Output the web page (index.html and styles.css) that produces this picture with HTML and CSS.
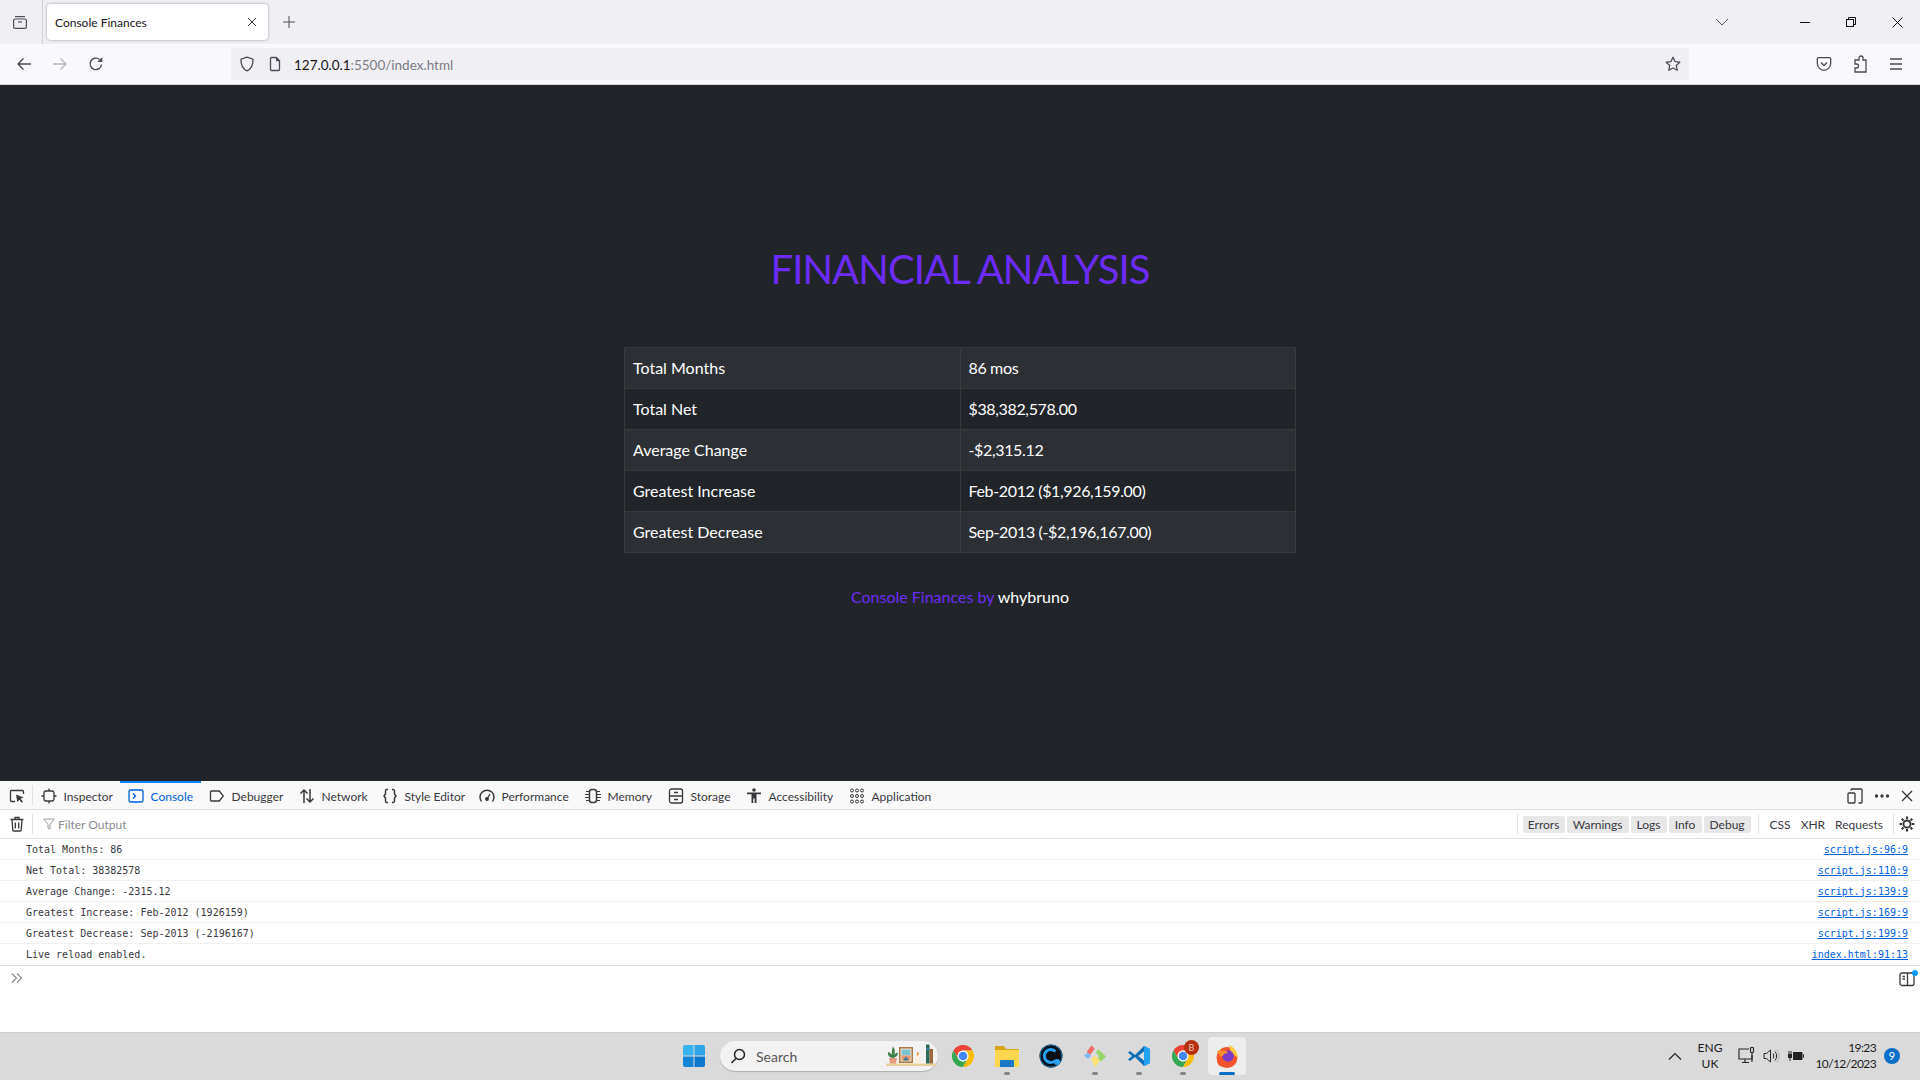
FILE: index.html
```html
<!DOCTYPE html>
<html lang="en">
<head>
    <meta charset="UTF-8">
    <title>Console Finances</title>
    <link rel="stylesheet" href="styles.css">
</head>
<body>
    <svg class="defs">
        <symbol id="chrome" viewBox="0 0 24 24">
            <path fill="#ea4335" d="M2.47 6.5A11 11 0 0 1 21.53 6.5H12A5.5 5.5 0 0 0 7.24 14.75Z"/>
            <path fill="#34a853" d="M2.47 6.5L7.24 14.75A5.5 5.5 0 0 0 16.76 14.75L12 23A11 11 0 0 1 2.47 6.5Z"/>
            <path fill="#fbbc05" d="M21.53 6.5H12A5.5 5.5 0 0 1 16.76 14.75L12 23A11 11 0 0 0 21.53 6.5Z"/>
            <circle cx="12" cy="12" r="5.4" fill="#fff"/>
            <circle cx="12" cy="12" r="4.3" fill="#4285f4"/>
        </symbol>
    </svg>

    <!-- tab strip -->
    <div class="tabbar">
        <span class="tab-list-btn">
            <svg width="16" height="16" viewBox="0 0 16 16" fill="none" stroke="#4a4a55" stroke-width="1.2"><path d="M3 2.6h10"/><rect x="1.6" y="5" width="12.8" height="9.4" rx="1.6"/><path d="M6 8h4"/></svg>
        </span>
        <div class="tab">
            <span class="tab-title">Console Finances</span>
            <svg width="10" height="10" viewBox="0 0 10 10" stroke="#333" stroke-width="1"><path d="M1 1l8 8M9 1l-8 8"/></svg>
        </div>
        <span class="new-tab">
            <svg width="12" height="12" viewBox="0 0 12 12" stroke="#4a4a55" stroke-width="1"><path d="M6 0v12M0 6h12"/></svg>
        </span>
        <span class="tab-menu">
            <svg width="14" height="8" viewBox="0 0 14 8" fill="none" stroke="#5b5b66" stroke-width="1"><path d="M1 1l6 6 6-6"/></svg>
        </span>
        <span class="win-btn"><svg width="10" height="10" viewBox="0 0 10 10" stroke="#111" stroke-width="1"><path d="M0 5.5h10"/></svg></span>
        <span class="win-btn"><svg width="10" height="10" viewBox="0 0 10 10" fill="none" stroke="#111" stroke-width="1"><rect x=".5" y="2.5" width="7" height="7"/><path d="M2.5 2.5v-2h7v7h-2"/></svg></span>
        <span class="win-btn"><svg width="11" height="11" viewBox="0 0 11 11" stroke="#111" stroke-width="1"><path d="M.5.5l10 10M10.500.5l-10 10"/></svg></span>
    </div>

    <!-- address bar -->
    <div class="navbar">
        <span class="nav-btn"><svg width="16" height="16" viewBox="0 0 16 16" fill="none" stroke="#4a4a55" stroke-width="1.3"><path d="M15 8H2M7.500 2.500L2 8l5.500 5.500"/></svg></span>
        <span class="nav-btn"><svg width="16" height="16" viewBox="0 0 16 16" fill="none" stroke="#b4b4ba" stroke-width="1.3"><path d="M1 8h13M8.500 2.500L14 8l-5.500 5.500"/></svg></span>
        <span class="nav-btn"><svg width="16" height="16" viewBox="0 0 16 16" fill="none" stroke="#4a4a55" stroke-width="1.4"><path d="M13.500 8.500A5.700 5.700 0 1 1 11.500 3.500"/><path fill="#4a4a55" stroke="none" d="M14.300 1v5h-5z"/></svg></span>
        <div class="urlbar">
            <svg class="shield" width="16" height="16" viewBox="0 0 16 16" fill="none" stroke="#4a4a55" stroke-width="1.3"><path d="M8 1.200l6 2c.2 5.500-1.500 9.500-6 11.600C3.500 12.700 1.800 8.700 2 3.200z"/></svg>
            <svg class="page-icon" width="16" height="16" viewBox="0 0 16 16" fill="none" stroke="#4a4a55" stroke-width="1.3"><path d="M3.500 2.500a1 1 0 0 1 1-1h4.700l3.300 3.300v8.700a1 1 0 0 1-1 1h-7a1 1 0 0 1-1-1z"/><path fill="#4a4a55" stroke="none" d="M9 1.500h1l2.500 2.500v1.200H9z"/></svg>
            <span class="url"><span class="url-host">127.0.0.1</span>:5500/index.html</span>
            <svg class="star" width="16" height="16" viewBox="0 0 16 16" fill="none" stroke="#4a4a55" stroke-width="1.3" stroke-linejoin="round"><path d="M8 1.200l2 4.400 4.800.6-3.500 3.300.9 4.800L8 12l-4.200 2.300.9-4.800L1.200 6.200 6 5.600z"/></svg>
        </div>
        <span class="nav-tool"><svg width="16" height="16" viewBox="0 0 16 16" fill="none" stroke="#4a4a55" stroke-width="1.300"><path d="M2.500 1.700h11a1.200 1.200 0 0 1 1.200 1.200V7c0 4-3 7.300-6.700 7.300S1.300 11 1.300 7V2.900a1.200 1.200 0 0 1 1.200-1.200z"/><path d="M5 6.500l3 3 3-3"/></svg></span>
        <span class="nav-tool"><svg width="16" height="18" viewBox="0 0 16 18" fill="none" stroke="#4a4a55" stroke-width="1.300"><path d="M7 5V3a2 2 0 0 1 4 0v2h3v12H3v-4h1.500a2 2 0 0 0 0-4H3V5z"/></svg></span>
        <span class="nav-tool"><svg width="14" height="12" viewBox="0 0 14 12" stroke="#4a4a55" stroke-width="1.300"><path d="M1 1h12M1 6h12M1 11h12"/></svg></span>
    </div>

    <!-- the page itself -->
    <main class="page">
        <h1 class="page-title">FINANCIAL ANALYSIS</h1>
        <table class="stats">
            <tr><td>Total Months</td><td>86 mos</td></tr>
            <tr><td>Total Net</td><td>$38,382,578.00</td></tr>
            <tr><td>Average Change</td><td>-$2,315.12</td></tr>
            <tr><td>Greatest Increase</td><td>Feb-2012 ($1,926,159.00)</td></tr>
            <tr><td>Greatest Decrease</td><td>Sep-2013 (-$2,196,167.00)</td></tr>
        </table>
        <p class="credit">Console Finances by <span class="credit-name">whybruno</span></p>
    </main>

    <!-- devtools -->
    <section class="devtools">
        <div class="dev-toolbar">
            <span class="picker">
                <svg width="16" height="16" viewBox="0 0 16 16" fill="none" stroke="#38383d" stroke-width="1.300"><path d="M6 13.500H2.500a1 1 0 0 1-1-1v-9a1 1 0 0 1 1-1h11a1 1 0 0 1 1 1V6"/><path fill="#38383d" stroke="none" d="M7 6.500l7.500 3-3 1.300 2.500 3-1.300 1-2.400-3-2 2.200z"/></svg>
            </span>
            <div class="dev-tabs">
                <span class="dev-tab"><svg width="16" height="16" viewBox="0 0 16 16" fill="none" stroke="#38383d" stroke-width="1.300"><rect x="3" y="3" width="10" height="10" rx="2"/><path d="M8 .5V3M8 13v2.500M.5 8H3M13 8h2.500"/></svg>Inspector</span>
                <span class="dev-tab is-active"><svg width="16" height="16" viewBox="0 0 16 16" fill="none" stroke="#0060df" stroke-width="1.300"><rect x="1" y="2" width="14" height="12" rx="1.500"/><path d="M5 5.500L7.500 8 5 10.500"/></svg>Console</span>
                <span class="dev-tab"><svg width="16" height="16" viewBox="0 0 16 16" fill="none" stroke="#38383d" stroke-width="1.300"><path d="M2.500 3h7.800l4 5-4 5H2.500a1 1 0 0 1-1-1V4a1 1 0 0 1 1-1z"/></svg>Debugger</span>
                <span class="dev-tab"><svg width="16" height="16" viewBox="0 0 16 16" fill="none" stroke="#38383d" stroke-width="1.500"><path d="M5 15V2M1.500 5.500L5 2l3.500 3.500M11 1v13M7.500 10.500L11 14l3.500-3.500"/></svg>Network</span>
                <span class="dev-tab"><svg width="16" height="16" viewBox="0 0 16 16" fill="none" stroke="#38383d" stroke-width="1.500"><path d="M6 1.500H5a1.500 1.500 0 0 0-1.500 1.500v3L2 8l1.500 2v3A1.500 1.500 0 0 0 5 14.500h1M10 1.500h1A1.500 1.500 0 0 1 12.500 3v3L14 8l-1.500 2v3a1.500 1.500 0 0 1-1.500 1.500h-1"/></svg>Style Editor</span>
                <span class="dev-tab"><svg width="16" height="16" viewBox="0 0 16 16" fill="none" stroke="#38383d" stroke-width="1.500"><path d="M2.500 13.500A7 7 0 1 1 13.500 13.500"/><path d="M8 11l3-5" stroke-width="1.300"/><circle cx="8" cy="11" r="1.200" fill="#38383d"/></svg>Performance</span>
                <span class="dev-tab"><svg width="16" height="16" viewBox="0 0 16 16" fill="none" stroke="#38383d" stroke-width="1"><rect x="4.500" y="1.500" width="7" height="13" rx="2.500" stroke-width="1.500"/><path d="M1 3.500h3M0 6.500h4M0 9.500h4M1 12.500h3M12 3.500h3M12 6.500h4M12 9.500h4M12 12.500h3"/></svg>Memory</span>
                <span class="dev-tab"><svg width="16" height="16" viewBox="0 0 16 16" fill="none" stroke="#38383d" stroke-width="1.300"><rect x="1.500" y="1" width="13" height="14" rx="2"/><path d="M1.500 8h13M6 4.500h4M6 11.500h4"/></svg>Storage</span>
                <span class="dev-tab"><svg width="16" height="16" viewBox="0 0 16 16" fill="#38383d"><circle cx="8" cy="2" r="1.800"/><path d="M1 4.500h14v1.800h-4.500V15H8.700v-4.500H7.300V15H5.500V6.300H1z"/></svg>Accessibility</span>
                <span class="dev-tab"><svg width="16" height="16" viewBox="0 0 16 16" fill="none" stroke="#38383d" stroke-width="1"><circle cx="3" cy="2.500" r="1.500"/><circle cx="8" cy="2.500" r="1.500"/><circle cx="13" cy="2.500" r="1.500"/><circle cx="3" cy="8" r="1.500"/><circle cx="8" cy="8" r="1.500"/><circle cx="13" cy="8" r="1.500"/><circle cx="3" cy="13.500" r="1.500"/><circle cx="8" cy="13.500" r="1.500"/><circle cx="13" cy="13.500" r="1.500"/></svg>Application</span>
            </div>
            <div class="dev-actions">
                <svg width="16" height="16" viewBox="0 0 16 16" fill="none" stroke="#38383d" stroke-width="1.300"><rect x="1" y="5" width="7" height="10" rx="1"/><path d="M4 2.500V2a1 1 0 0 1 1-1h9a1 1 0 0 1 1 1v12a1 1 0 0 1-1 1h-2.500"/></svg>
                <svg width="16" height="16" viewBox="0 0 16 16" fill="#38383d"><circle cx="2.500" cy="8" r="1.700"/><circle cx="8" cy="8" r="1.700"/><circle cx="13.500" cy="8" r="1.700"/></svg>
                <svg width="12" height="12" viewBox="0 0 12 12" stroke="#38383d" stroke-width="1.400"><path d="M1 1l10 10M11 1L1 11"/></svg>
            </div>
        </div>

        <div class="filter-bar">
            <span class="picker">
                <svg width="16" height="16" viewBox="0 0 16 16" fill="none" stroke="#38383d" stroke-width="1.300"><path d="M1.500 3.500h13M6 3.500V1.500h4v2M3 3.500l.8 10.500a1 1 0 0 0 1 1h6.400a1 1 0 0 0 1-1L13 3.500M6.300 6.500v6M9.700 6.500v6"/></svg>
            </span>
            <span class="filter-input">
                <svg width="12" height="12" viewBox="0 0 12 12" fill="none" stroke="#9a9aa0" stroke-width="1"><path d="M.7 1h10.600L7 6.500v4.500L5 10V6.500z"/></svg>
                Filter Output
            </span>
            <div class="levels">
                <span class="level level-errors">Errors</span>
                <span class="level level-warnings">Warnings</span>
                <span class="level level-logs">Logs</span>
                <span class="level level-info">Info</span>
                <span class="level level-debug">Debug</span>
            </div>
            <div class="net-filters">
                <span>CSS</span>
                <span>XHR</span>
                <span>Requests</span>
            </div>
            <span class="gear">
                <svg width="16" height="16" viewBox="0 0 16 16" fill="none" stroke="#38383d"><circle cx="8" cy="8" r="3.600" stroke-width="2"/><path stroke-width="2.200" d="M8 .5v2.500M8 13v2.500M.5 8H3M13 8h2.500M2.700 2.700l1.800 1.800M11.500 11.500l1.800 1.800M13.300 2.700l-1.800 1.800M4.500 11.500l-1.800 1.800"/></svg>
            </span>
        </div>

        <div class="log">
            <div class="log-row"><span>Total Months: 86</span><a class="log-src">script.js:96:9</a></div>
            <div class="log-row"><span>Net Total: 38382578</span><a class="log-src">script.js:110:9</a></div>
            <div class="log-row"><span>Average Change: -2315.12</span><a class="log-src">script.js:139:9</a></div>
            <div class="log-row"><span>Greatest Increase: Feb-2012 (1926159)</span><a class="log-src">script.js:169:9</a></div>
            <div class="log-row"><span>Greatest Decrease: Sep-2013 (-2196167)</span><a class="log-src">script.js:199:9</a></div>
            <div class="log-row"><span>Live reload enabled.</span><a class="log-src">index.html:91:13</a></div>
        </div>

        <div class="console-input">
            <svg width="12" height="10" viewBox="0 0 12 10" fill="none" stroke="#8a8a90" stroke-width="1.200"><path d="M1 .5L5.500 5 1 9.500M6 .5L10.500 5 6 9.500"/></svg>
            <span class="editor-toggle">
                <svg width="16" height="16" viewBox="0 0 16 16" fill="none" stroke="#38383d" stroke-width="1.300"><rect x="1" y="2" width="14" height="12.500" rx="2"/><path d="M8.500 2v12.500M3.500 5.500h2.500M3.500 8h2.500"/></svg>
                <i class="toggle-dot"></i>
            </span>
        </div>
    </section>

    <!-- windows taskbar -->
    <footer class="taskbar">
        <div class="task-center">
            <span class="start">
                <svg width="24" height="24" viewBox="0 0 24 24"><path fill="#35b4f0" d="M1 3a2 2 0 0 1 2-2h8.500v10.500H1z"/><path fill="#2ea4e8" d="M12.500 1H21a2 2 0 0 1 2 2v8.500H12.500z"/><path fill="#1484d6" d="M1 12.500h10.500V23H3a2 2 0 0 1-2-2z"/><path fill="#0f78cc" d="M12.500 12.500H23V21a2 2 0 0 1-2 2h-8.500z"/></svg>
            </span>
            <div class="search">
                <svg width="16" height="16" viewBox="0 0 16 16" fill="none" stroke="#222" stroke-width="1.500"><circle cx="9.500" cy="6.500" r="5"/><path d="M6 10.500L1.500 15"/></svg>
                <span class="search-text">Search</span>
                <svg class="search-art" width="50" height="30" viewBox="0 0 50 30">
                    <path fill="#e9cf98" d="M0 22.500h50V25H0z"/>
                    <path fill="#e39a7a" d="M3 17h8l-1 5.500H4z"/>
                    <path fill="#3f7f48" d="M7 17c-4-.5-5.500-3-5-6 2 .5 3 1.500 4 3-.5-3 0-6 1-8.500 2 2.500 2.500 6 1 8.500 1-1.500 2.500-2.500 4-2.500 0 3-2 5-5 5.500z"/>
                    <path fill="#a9794a" d="M13 6h14v16H13z"/>
                    <path fill="#f3e6cf" d="M14.500 7.500h11v13h-11z"/>
                    <path fill="#7cc4d4" d="M15.500 8.500h9v6h-9z"/>
                    <path fill="#e8956c" d="M15.500 14.500h9v5h-9z"/>
                    <path fill="#2f7fa0" d="M17 19.500l3-4 3 4z"/>
                    <path fill="#f8f0dc" d="M29 16h5.500v6.500H29z"/>
                    <path fill="#ee9a2e" d="M31.800 10.500c1.200 1.500 1.500 3 0 4.500-1.500-1.500-1.200-3 0-4.500z"/>
                    <path fill="#2e6a58" d="M40 3.500h3.500v19H40z"/>
                    <path fill="#3a7fa8" d="M40 7h3.500v2H40z"/>
                    <path fill="#9a6a3c" d="M43.500 8H47v14.500h-3.500z"/>
                </svg>
            </div>
            <span class="task-app"><svg width="24" height="24"><use href="#chrome"/></svg></span>
            <span class="task-app is-open">
                <svg width="26" height="24" viewBox="0 0 26 24"><path fill="#d9a514" d="M1 3a1 1 0 0 1 1-1h8l2 3h13v4H1z"/><path fill="#fbd64f" d="M1 6h24v17H1z"/><path fill="#1a78c8" d="M7 16h12a1 1 0 0 1 1 1v6H6v-6a1 1 0 0 1 1-1z"/></svg>
            </span>
            <span class="task-app">
                <svg width="24" height="24" viewBox="0 0 24 24"><circle cx="12" cy="12" r="11.500" fill="#0c0f14"/><circle cx="12" cy="12" r="11" fill="none" stroke="#1a8be0" stroke-width=".8"/><path fill="none" stroke="#2aa0f2" stroke-width="3" d="M16.500 7.500a6.500 6.500 0 1 0 0 9"/><circle cx="18" cy="18" r="3" fill="#2aa0f2"/></svg>
            </span>
            <span class="task-app is-open">
                <svg width="24" height="24" viewBox="0 0 24 24"><path fill="#f06a60" d="M8.500 1.500l3.200 3.200-4.700 6.300-3.200-3.200z"/><path fill="#7fb8f0" d="M5 8.500l3 3-3 3.500-4-3.500z"/><path fill="#94d66a" d="M15 5l8 7.500-5 5-3.500-3 2-2.500-3.500-3z"/><path fill="#ffe070" d="M8.500 15l3.500-3.500 5 5L12 23z"/></svg>
            </span>
            <span class="task-app is-open">
                <svg width="24" height="24" viewBox="0 0 24 24"><path fill="#0e6fb8" d="M1 8.500L3 7l5 4 9-9 6 3v14l-6 3-9-9-5 4-2-1.500L5 12z"/><path fill="#22a2ee" d="M17 2l6 3v14l-6 3z"/><path fill="#dcdcdc" d="M17 7.500L11.200 12l5.800 4.500z"/></svg>
            </span>
            <span class="task-app is-open">
                <svg width="24" height="24"><use href="#chrome"/></svg>
                <b class="app-badge">B</b>
            </span>
            <span class="task-app is-current">
                <svg width="24" height="24" viewBox="0 0 24 24"><circle cx="12" cy="13.500" r="10.500" fill="#f2542c"/><path fill="#ffca3a" d="M14 1c5 2 9 7 8.500 12.500L16 9z"/><path fill="#ff9a2e" d="M2 7c1-1 4-1 6 1l-2 5z"/><circle cx="13" cy="12" r="5.800" fill="#7a3cc8"/><path fill="#f2542c" d="M5 22c-2-1-3-4-3-7 2 4 6 6 11 5 3 0 6-2 8-5-1 5-4 8-8 8-3 .5-6 0-8-1z"/><path fill="#ff8f2e" d="M5 7c3-1 7-1 8 2-3 0-5 1-5 3-2 0-3-2-3-5z"/></svg>
                <i class="current-bar"></i>
            </span>
        </div>
        <div class="tray">
            <svg class="tray-chevron" width="14" height="8" viewBox="0 0 14 8" fill="none" stroke="#222" stroke-width="1.200"><path d="M1 7.500l6-6 6 6"/></svg>
            <div class="tray-lang"><span>ENG</span><span>UK</span></div>
            <svg class="tray-net" width="18" height="18" viewBox="0 0 18 18" fill="none" stroke="#222" stroke-width="1.100"><path d="M11 2H1v10h13V8M7 12v3.500M4 15.500h7"/><rect x="12.500" y=".5" width="3" height="5" rx="1"/><path d="M14 5.500V15"/></svg>
            <svg class="tray-vol" width="17" height="16" viewBox="0 0 17 16" fill="none" stroke="#222" stroke-width="1"><path d="M1 5.500h2.500L7.500 2v12l-4-3.500H1z"/><path d="M10 5.500a4 4 0 0 1 0 5M12 3.500a7 7 0 0 1 0 9"/><path stroke="#aaa" d="M14 2a9 9 0 0 1 0 12"/></svg>
            <svg class="tray-batt" width="16" height="14" viewBox="0 0 16 14"><path fill="#222" d="M5 3h8.500a1 1 0 0 1 1 1v6a1 1 0 0 1-1 1H5zM15 5.500h1v3h-1zM0 5h4v4H0z"/><path stroke="#222" d="M1 2v3M3 2v3M2 9v3"/></svg>
            <div class="tray-clock"><span>19:23</span><span>10/12/2023</span></div>
            <span class="notif">9</span>
        </div>
    </footer>
</body>
</html>
```

FILE: styles.css
```css
* {
    box-sizing: border-box;
}

html, body {
    margin: 0;
    height: 1080px;
    overflow: hidden;
}

body {
    display: flex;
    flex-direction: column;
    width: 1920px;
    font-family: "Lato", "Noto Sans", sans-serif;
    font-size: 12px;
    color: #15141a;
    background: #fff;
}

svg {
    display: block;
    flex: none;
}

.defs {
    width: 0;
    height: 0;
    position: absolute;
}

/* tab strip */
.tabbar {
    height: 44px;
    flex: none;
    display: flex;
    align-items: center;
    background: #f0f0f4;
}

.tabbar > * {
    flex: none;
}

.tab-list-btn {
    width: 43px;
    height: 44px;
    display: flex;
    align-items: center;
    justify-content: center;
    padding-right: 3px;
    border-right: 1px solid #cfcfd4;
}

.tab {
    width: 221px;
    height: 36px;
    margin-left: 4px;
    padding: 0 11px 0 8px;
    display: flex;
    align-items: center;
    justify-content: space-between;
    background: #fff;
    border-radius: 4px;
    box-shadow: 0 0 3px rgba(0, 0, 0, .35);
}

.tab-title {
    font-size: 12px;
    color: #15141a;
}

.new-tab {
    margin-left: 15px;
}

.tab-menu {
    margin-left: 1420px;
}

.win-btn {
    width: 46px;
    display: flex;
    justify-content: center;
}

.tab-menu + .win-btn {
    margin-left: 53px;
}

/* address bar */
.navbar {
    height: 41px;
    flex: none;
    display: flex;
    align-items: center;
    padding-left: 6px;
    background: #f9f9fb;
    border-bottom: 1px solid #cfcfd8;
}

.navbar > * {
    flex: none;
}

.nav-btn {
    width: 36px;
    display: flex;
    justify-content: center;
}

.urlbar {
    width: 1458px;
    height: 32px;
    margin-left: 117px;
    padding: 0 8px;
    display: flex;
    align-items: center;
    background: #f0f0f4;
    border-radius: 4px;
}

.page-icon {
    margin-left: 12px;
}

.url {
    margin-left: 11px;
    padding-top: 2px;
    font-size: 13.500px;
    color: #7b7b84;
}

.url-host {
    color: #15141a;
}

.star {
    margin-left: auto;
}

.nav-tool {
    width: 36px;
    display: flex;
    justify-content: center;
}

.urlbar + .nav-tool {
    margin-left: 117px;
}

/* page */
.page {
    flex: 1;
    display: flex;
    flex-direction: column;
    align-items: center;
    background: #212529;
    padding-top: 160px;
}

.page-title {
    margin: 0 0 54px;
    font-size: 40px;
    line-height: 48px;
    font-weight: 400;
    letter-spacing: -.9px;
    color: #6c2bf6;
}

.stats {
    width: 672px;
    table-layout: fixed;
    border-collapse: collapse;
    font-size: 16px;
    color: #fff;
}

.stats td {
    height: 41px;
    padding: 7px 8px 9px;
    border: 1px solid #373b3e;
}

.stats td:last-child {
    letter-spacing: -.35px;
}

.stats tr:nth-child(odd) {
    background: #2c3034;
}

.credit {
    margin: 32px 0 0;
    font-size: 16px;
    line-height: 24px;
    color: #6c2bf6;
}

.credit-name {
    color: #fff;
}

/* devtools */
.devtools {
    flex: none;
    height: 251px;
    display: flex;
    flex-direction: column;
    background: #fff;
}

.dev-toolbar {
    height: 29px;
    flex: none;
    display: flex;
    align-items: stretch;
    background: #f9f9fa;
    border-bottom: 1px solid #e0e0e2;
    color: #38383d;
}

.picker {
    width: 33px;
    flex: none;
    display: flex;
    align-items: center;
    justify-content: center;
    position: relative;
}

.dev-toolbar > .picker {
    padding-top: 2px;
}

.picker::after {
    content: "";
    position: absolute;
    right: 0;
    top: 4px;
    bottom: 4px;
    width: 1px;
    background: #e0e0e2;
}

.dev-tabs {
    display: grid;
    grid-template-columns: 87px 81px 90px 83px 97px 106px 83px 78px 103px 99px;
}

.dev-tab {
    display: flex;
    align-items: center;
    gap: 6.500px;
    padding: 2px 0 0 8px;
    white-space: nowrap;
}

.dev-tab.is-active {
    color: #0060df;
    border-top: 2px solid #0a84ff;
    padding-top: 0;
}

.dev-actions {
    margin-left: auto;
    display: flex;
    align-items: center;
    gap: 11px;
    padding: 2px 7px 0 0;
}

.filter-bar {
    height: 29px;
    flex: none;
    display: flex;
    align-items: stretch;
    border-bottom: 1px solid #e0e0e2;
    color: #38383d;
}

.filter-input {
    display: flex;
    align-items: center;
    gap: 3px;
    padding-left: 10px;
    color: #8a8a90;
}

.levels {
    margin-left: auto;
    display: flex;
    align-items: center;
    gap: 2px;
    padding: 0 7px 0 5px;
    border-left: 1px solid #e0e0e2;
    margin-top: 4px;
    margin-bottom: 4px;
}

.level {
    height: 17px;
    display: flex;
    align-items: center;
    justify-content: center;
    background: #e7e7e8;
    border-radius: 2px;
}

.level-errors { width: 42px; }
.level-warnings { width: 62px; }
.level-logs { width: 36px; }
.level-info { width: 33px; }
.level-debug { width: 47px; }

.net-filters {
    display: flex;
    align-items: center;
    gap: 10px;
    padding: 0 10px 0 11px;
    border-left: 1px solid #e0e0e2;
    margin-top: 4px;
    margin-bottom: 4px;
}

.gear {
    width: 27px;
    display: flex;
    align-items: center;
    justify-content: center;
    border-left: 1px solid #e0e0e2;
    margin-top: 4px;
    margin-bottom: 4px;
}

.log {
    flex: none;
    border-bottom: 1px solid #e0e0e2;
    font-family: "DejaVu Sans Mono", monospace;
    font-size: 10px;
    color: #38383d;
}

.log-row {
    height: 21px;
    display: flex;
    align-items: center;
    justify-content: space-between;
    padding: 0 12px 0 26px;
    border-bottom: 1px solid #f0f0f1;
}

.log-row:last-child {
    border-bottom: 0;
}

.log-src {
    color: #0060df;
    text-decoration: underline;
}

.console-input {
    flex: 1;
    display: flex;
    align-items: flex-start;
    justify-content: space-between;
    padding: 7px 5px 0 11px;
}

.editor-toggle {
    position: relative;
    margin-top: -2px;
}

.toggle-dot {
    position: absolute;
    top: -1px;
    right: -3px;
    width: 6px;
    height: 6px;
    border-radius: 50%;
    background: #0a9bff;
}

/* taskbar */
.taskbar {
    height: 48px;
    flex: none;
    display: flex;
    align-items: center;
    padding: 0 0 1px 682px;
    background: #dadada;
    border-top: 1px solid #cdcdcd;
    color: #1a1a1a;
}

.task-center {
    display: flex;
    align-items: center;
}

.start {
    width: 24px;
    margin-right: 14px;
}

.search {
    width: 218px;
    height: 30px;
    margin-right: 3px;
    padding: 0 0 0 10px;
    display: flex;
    align-items: center;
    gap: 10px;
    background: #f2f2f2;
    border-radius: 15px;
    box-shadow: 0 1px 1px rgba(0, 0, 0, .2);
    font-size: 14px;
    color: #555;
}

.search-art {
    margin-left: auto;
    margin-right: 2px;
}

.task-app {
    width: 44px;
    height: 38px;
    position: relative;
    display: flex;
    align-items: center;
    justify-content: center;
}

.task-app.is-open::after {
    content: "";
    position: absolute;
    bottom: 0;
    left: 19px;
    width: 6px;
    height: 3px;
    border-radius: 2px;
    background: #858585;
}

.task-app.is-current {
    width: 38px;
    margin: 0 3px;
    background: #ededed;
    border-radius: 4px;
}

.current-bar {
    position: absolute;
    bottom: 0;
    left: 11px;
    width: 16px;
    height: 3px;
    border-radius: 2px;
    background: #0a6fc8;
}

.app-badge {
    position: absolute;
    top: 3px;
    right: 6px;
    width: 15px;
    height: 15px;
    border-radius: 50%;
    background: #b5300f;
    color: #f3c4b4;
    font-size: 9px;
    font-weight: 400;
    line-height: 15px;
    text-align: center;
}

.tray {
    margin-left: auto;
    display: flex;
    align-items: center;
    padding-right: 20px;
}

.tray-lang {
    width: 40px;
    margin-left: 8px;
    display: flex;
    flex-direction: column;
    align-items: center;
    line-height: 16px;
}

.tray-net {
    margin-left: 8px;
}

.tray-vol {
    margin-left: 7px;
}

.tray-batt {
    margin-left: 8px;
}

.tray-clock {
    width: 72px;
    display: flex;
    flex-direction: column;
    align-items: flex-end;
    line-height: 16px;
    letter-spacing: -.6px;
}

.notif {
    width: 16px;
    height: 16px;
    margin-left: 8px;
    border-radius: 50%;
    background: #0a6fc8;
    color: #fff;
    font-size: 11px;
    line-height: 16px;
    text-align: center;
}
```
